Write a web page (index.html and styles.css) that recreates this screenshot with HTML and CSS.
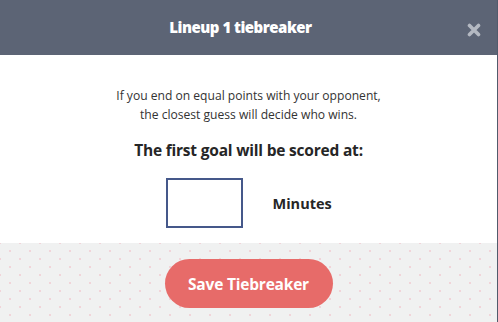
FILE: index.html
```html
<!DOCTYPE html>
<html>
<head>
<meta charset="utf-8">
<link rel="stylesheet" href="styles.css">
</head>
<body>
<div class="modal">
  <div class="header">
    <div class="title">Lineup 1 tiebreaker</div>
    <button class="close" aria-label="Close">
      <svg width="14" height="14" viewBox="0 0 14 14"><path d="M2.5 2.5 L11.5 11.5 M11.5 2.5 L2.5 11.5" stroke="#b4b9c2" stroke-width="3.6" stroke-linecap="round"/></svg>
    </button>
  </div>
  <div class="content">
    <p class="desc">If you end on equal points with your opponent,<br>the closest guess will decide who wins.</p>
    <h2 class="question">The first goal will be scored at:</h2>
    <div class="row">
      <input class="minutes-input" type="text">
      <span class="unit">Minutes</span>
    </div>
  </div>
  <div class="footer">
    <button class="save">Save Tiebreaker</button>
  </div>
</div>
</body>
</html>
```
FILE: styles.css
```css
html, body {
  margin: 0;
  padding: 0;
  background: #ffffff;
}
body {
  font-family: "Open Sans", "Liberation Sans", sans-serif;
  color: #2b2b2b;
}
.modal {
  width: 497px;
  height: 322px;
  border-right: 1px solid #515b6c;
  display: flex;
  flex-direction: column;
}
.header {
  position: relative;
  height: 55px;
  background: #5c6475;
  display: flex;
  align-items: center;
  justify-content: center;
  padding-right: 16px;
}
.title {
  color: #ffffff;
  font-weight: 800;
  font-size: 15px;
  letter-spacing: -0.5px;
  margin-top: -2px;
}
.close {
  position: absolute;
  right: 16px;
  top: 23px;
  width: 14px;
  height: 14px;
  padding: 0;
  border: 0;
  background: none;
  display: flex;
}
.content {
  flex: 0 0 auto;
  height: 188px;
  box-sizing: border-box;
  padding-top: 31px;
  display: flex;
  flex-direction: column;
  align-items: center;
}
.desc {
  margin: 0;
  font-size: 12.1px;
  line-height: 19px;
  text-align: center;
  color: #333;
}
.question {
  margin: 16px 0 0;
  font-size: 15.5px;
  line-height: 20px;
  font-weight: 700;
  color: #262626;
  letter-spacing: -0.2px;
}
.row {
  margin-top: 18px;
  display: flex;
  align-items: center;
  gap: 30px;
}
.minutes-input {
  width: 77px;
  height: 50px;
  box-sizing: border-box;
  border: 2px solid #45588a;
  outline: none;
  padding: 0;
  background: #fff;
}
.unit {
  font-size: 14.5px;
  font-weight: 700;
  color: #262626;
  width: 59px;
}
.footer {
  flex: 1;
  background-color: #f0f1f1;
  background-image:
    radial-gradient(circle, #f0d3d8 0.7px, transparent 1.1px),
    radial-gradient(circle, #f0d3d8 0.7px, transparent 1.1px);
  background-size: 20px 16px, 20px 16px;
  background-position: 0 0, 10px 8px;
  display: flex;
  justify-content: center;
  padding-top: 16px;
}
.save {
  width: 168px;
  height: 49px;
  border: 0;
  border-radius: 25px;
  background: #e76b69;
  color: #fff;
  font-family: "Open Sans", "Liberation Sans", sans-serif;
  font-weight: 700;
  font-size: 15.5px;
  letter-spacing: -0.2px;
  padding: 0;
}
```
